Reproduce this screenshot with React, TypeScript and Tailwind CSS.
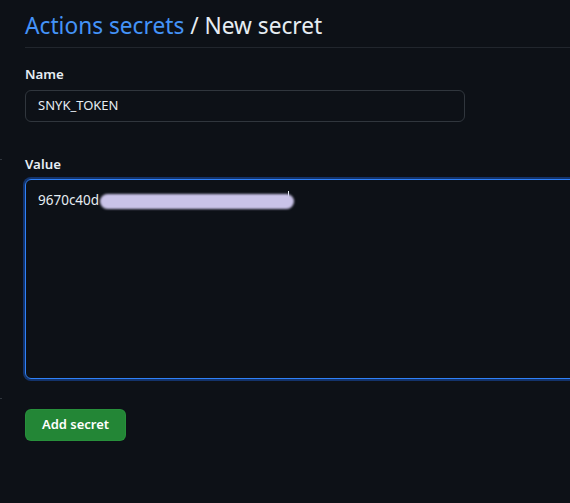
import React from "react";

export default function App() {
  return (
    <div
      className="w-[570px] h-[503px] overflow-hidden bg-[#0d1117] relative"
      style={{ fontFamily: '"Noto Sans", "Liberation Sans", sans-serif' }}
    >
      <div className="absolute left-0 top-[159px] w-[2px] h-[1px] bg-[#30363d]" />
      <div className="absolute left-0 top-[398px] w-[2px] h-[1px] bg-[#30363d]" />
      <div className="pl-[25px] pt-[11px]">
        <div className="border-b border-[#21262d] pb-[6px] w-[600px]">
          <h1 className="text-[22.7px] leading-[30px] text-[#e6edf3] font-normal whitespace-nowrap">
            <span className="text-[#4493f8]">Actions secrets</span> / New secret
          </h1>
        </div>
        <div className="mt-[16px]">
          <div className="text-[13.3px] leading-[20px] font-semibold text-[#e6edf3]">Name</div>
          <div className="mt-[6px] w-[440px] h-[32px] border border-[#30363d] rounded-[6px] flex items-center pl-[12px] text-[13px] text-[#e6edf3]">
            SNYK_TOKEN
          </div>
        </div>
        <div className="mt-[32px]">
          <div className="text-[13.3px] leading-[20px] font-semibold text-[#e6edf3]">Value</div>
          <div className="mt-[5px] w-[620px] h-[200px] border border-[#2f81f7] rounded-[6px] shadow-[0_0_0_2px_#13336b] relative">
            <div className="absolute left-[12px] top-[10px] flex items-center text-[13.5px] leading-[20px] text-[#e6edf3]">
              <span>9670c40d</span>
              <span className="ml-[1px] w-[194px] h-[15px] mt-[2px] rounded-full bg-[#c9c3e8] blur-[1px]" />
              <span className="ml-[-6px] -mt-[8px] w-[1px] h-[10px] bg-[#e6edf3]" />
            </div>
          </div>
        </div>
        <button className="mt-[30px] w-[101px] h-[32px] rounded-[6px] bg-[#238636] border border-[#2ea043]/40 text-white text-[13px] font-semibold flex items-center justify-center">
          Add secret
        </button>
      </div>
    </div>
  );
}
